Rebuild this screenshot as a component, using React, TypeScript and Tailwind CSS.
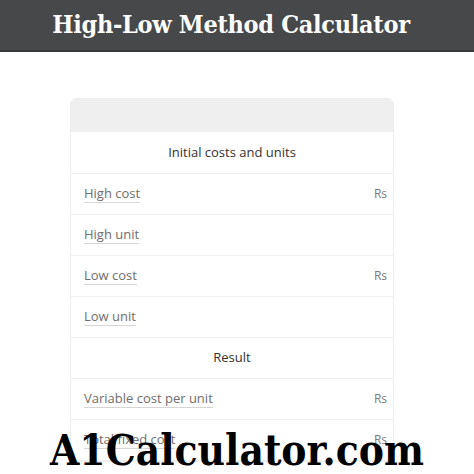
import React from "react";

const bodyFont = { fontFamily: '"Open Sans", "Noto Sans", sans-serif' };
const slabFont = { fontFamily: '"DejaVu Serif Condensed", "DejaVu Serif", serif' };

function InputRow({ label, unit }: { label: string; unit?: string }) {
  return (
    <div className="flex h-[41px] items-center justify-between border-b border-[#f0f0f0] pl-[13px] pr-[6px]">
      <span className="border-b border-[#d6d6d6] pb-[1px] text-[13px] leading-[16px] text-[#6e6e6e]">{label}</span>
      {unit && <span className="text-[12px] text-[#7a7a7a]">{unit}</span>}
    </div>
  );
}

function SectionTitle({ title, tall }: { title: string; tall?: boolean }) {
  return (
    <div
      className={
        tall
          ? "flex h-[42px] items-center justify-center border-b border-[#f0f0f0] text-[13px] font-medium text-[#333]"
          : "flex h-[41px] items-center justify-center border-b border-[#f0f0f0] text-[13px] font-medium text-[#333]"
      }
    >
      {title}
    </div>
  );
}

export default function App() {
  return (
    <div className="relative h-[474px] w-[474px] overflow-hidden bg-white" style={bodyFont}>
      <div className="flex h-[52px] items-center justify-center border-b-2 border-[#3a3a3a] bg-[#474849] pr-[12px]">
        <h1 className="text-[25px] font-bold tracking-[-0.3px] text-white" style={slabFont}>
          High-Low Method Calculator
        </h1>
      </div>
      <div className="ml-[70px] mt-[46px] w-[324px] overflow-hidden rounded-[6px] border border-[#ededed]">
        <div className="h-[33px] bg-[#efefef]" />
        <SectionTitle title="Initial costs and units" tall />
        <InputRow label="High cost" unit="Rs" />
        <InputRow label="High unit" />
        <InputRow label="Low cost" unit="Rs" />
        <InputRow label="Low unit" />
        <SectionTitle title="Result" />
        <InputRow label="Variable cost per unit" unit="Rs" />
        <InputRow label="Total fixed cost" unit="Rs" />
      </div>
      <div
        className="absolute left-0 right-0 top-[425px] text-center text-[42px] font-bold leading-[52px] text-black"
        style={slabFont}
      >
        A1Calculator.com
      </div>
    </div>
  );
}
